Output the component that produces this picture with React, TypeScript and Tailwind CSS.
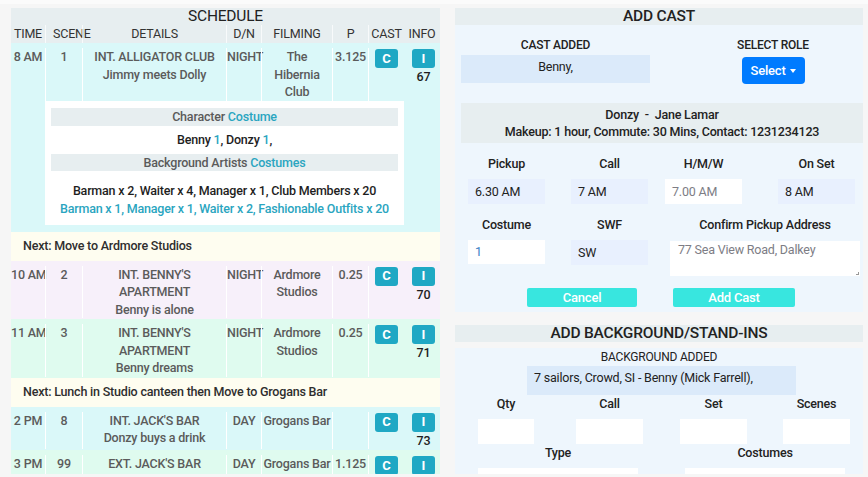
import React from "react";

const COLS = "grid grid-cols-[34px_37px_144px_35px_71px_36px_36px_36px]";

type Scene = {
  time: string;
  scene: string;
  details: string[];
  dn: string;
  filming: string[];
  p: string;
  info: string;
  bg: string;
  costumes?: boolean;
};

const scenes: (Scene | string)[] = [
  {
    time: "8 AM",
    scene: "1",
    details: ["INT. ALLIGATOR CLUB", "Jimmy meets Dolly"],
    dn: "NIGHT",
    filming: ["The", "Hibernia", "Club"],
    p: "3.125",
    info: "67",
    bg: "bg-[#daf8f9]",
    costumes: true,
  },
  "Next: Move to Ardmore Studios",
  {
    time: "10 AM",
    scene: "2",
    details: ["INT. BENNY'S", "APARTMENT", "Benny is alone"],
    dn: "NIGHT",
    filming: ["Ardmore", "Studios"],
    p: "0.25",
    info: "70",
    bg: "bg-[#f7f0fa]",
  },
  {
    time: "11 AM",
    scene: "3",
    details: ["INT. BENNY'S", "APARTMENT", "Benny dreams"],
    dn: "NIGHT",
    filming: ["Ardmore", "Studios"],
    p: "0.25",
    info: "71",
    bg: "bg-[#dffbef]",
  },
  "Next: Lunch in Studio canteen then Move to Grogans Bar",
  {
    time: "2 PM",
    scene: "8",
    details: ["INT. JACK'S BAR", "Donzy buys a drink"],
    dn: "DAY",
    filming: ["Grogans Bar"],
    p: "",
    info: "73",
    bg: "bg-[#daf8f9]",
  },
  {
    time: "3 PM",
    scene: "99",
    details: ["EXT. JACK'S BAR"],
    dn: "DAY",
    filming: ["Grogans Bar"],
    p: "1.125",
    info: "74",
    bg: "bg-[#dffbef]",
  },
];

function Btn({ label }: { label: string }) {
  return (
    <span className="inline-flex h-[19px] w-[23px] items-center justify-center rounded-[3px] bg-[#1fa8c4] text-[13px] font-bold tracking-normal text-white">
      {label}
    </span>
  );
}

function Lines({ items }: { items: string[] }) {
  return (
    <>
      {items.map((l) => (
        <div key={l} className="whitespace-nowrap">
          {l}
        </div>
      ))}
    </>
  );
}

function CostumeBox() {
  return (
    <div className="col-start-2 col-span-6 mb-[6px] bg-white px-[6px] pt-[7px] pb-[7px] text-center whitespace-nowrap">
      <div className="h-[18px] bg-[#e7eef0] leading-[18px] text-[#5a5a5a]">
        Character <span className="text-[#2aa5c0]">Costume</span>
      </div>
      <div className="mt-[5px] mb-[6px] leading-[17px] text-[#1e1e1e]">
        Benny <span className="text-[#2aa5c0]">1</span>, Donzy <span className="text-[#2aa5c0]">1</span>,
      </div>
      <div className="h-[17px] bg-[#e7eef0] leading-[17px] text-[#5a5a5a]">
        Background Artists <span className="text-[#2aa5c0]">Costumes</span>
      </div>
      <div className="mt-[11px] leading-[18px] text-[#1e1e1e]">Barman x 2, Waiter x 4, Manager x 1, Club Members x 20</div>
      <div className="leading-[18px] text-[#2aa5c0]">Barman x 1, Manager x 1, Waiter x 2, Fashionable Outfits x 20</div>
    </div>
  );
}

function SceneRow({ s }: { s: Scene }) {
  const cell = "border-l border-white text-center";
  return (
    <div className={`${COLS} ${s.bg} pt-[5px] pb-[1px] leading-[17.5px] font-medium text-[#5b5b5b]`}>
      <div className="text-center whitespace-nowrap">{s.time}</div>
      <div className={cell}>{s.scene}</div>
      <div className={cell}>
        <Lines items={s.details} />
      </div>
      <div className={`${cell} whitespace-nowrap`}>{s.dn}</div>
      <div className={cell}>
        <Lines items={s.filming} />
      </div>
      <div className={cell}>{s.p}</div>
      <div className={`${cell} pt-[1px]`}>
        <Btn label="C" />
      </div>
      <div className="flex flex-col items-center pt-[1px] pl-[3px]">
        <Btn label="I" />
        <span className="text-[#1e1e1e]">{s.info}</span>
      </div>
      {s.costumes && <CostumeBox />}
    </div>
  );
}

function Schedule() {
  const heads = ["TIME", "SCENE", "DETAILS", "D/N", "FILMING", "P", "CAST", "INFO"];
  return (
    <div className="h-[466px] w-[429px] overflow-hidden">
      <div className="bg-[#e7eef0]">
        <div className="h-[17px] text-center text-[15.5px] leading-[17px] text-[#222]">SCHEDULE</div>
        <div className={`${COLS} h-[18px] leading-[18px] text-[#333]`}>
          {heads.map((h, i) => (
            <div
              key={h}
              className={
                i === 1
                  ? "border-l border-white/70 pl-[7px] whitespace-nowrap"
                  : i > 1 && i < 7
                  ? "border-l border-white/70 text-center whitespace-nowrap"
                  : "text-center whitespace-nowrap"
              }
            >
              {h}
            </div>
          ))}
        </div>
      </div>
      {scenes.map((s, i) =>
        typeof s === "string" ? (
          <div key={i} className="flex h-[29px] items-center bg-[#fefdf0] pl-[12px] font-medium text-[#2e2e2e]">
            {s}
          </div>
        ) : (
          <SceneRow key={i} s={s} />
        )
      )}
    </div>
  );
}

function Label({ children }: { children: React.ReactNode }) {
  return <div className="text-center leading-[18px] font-medium whitespace-nowrap text-[#222]">{children}</div>;
}

function AddCast() {
  return (
    <div>
      <div className="h-[17px] bg-[#e7eef0] text-center text-[15.5px] leading-[17px] font-medium text-[#222]">ADD CAST</div>
      <div className="bg-[#eef6fd] pb-[5px]">
        <div className="flex pl-[6px] pt-[12px]">
          <div className="w-[189px]">
            <div className="text-center text-[12px] leading-[16px] font-medium text-[#222]">CAST ADDED</div>
            <div className="mt-[2px] h-[28px] bg-[#dbeafa] pt-[4px] text-center leading-[16px] text-[#222]">Benny,</div>
          </div>
          <div className="ml-[33px] flex w-[180px] flex-col items-center">
            <div className="text-[12px] leading-[16px] font-medium text-[#222]">SELECT ROLE</div>
            <button className="mt-[4px] flex h-[27px] w-[63px] items-center justify-center gap-[4px] rounded-[4px] bg-[#007bff] text-[13px] font-medium text-white">
              Select
              <span className="mt-[1px] h-0 w-0 border-x-[3.5px] border-t-[4px] border-x-transparent border-t-white" />
            </button>
          </div>
        </div>
        <div className="mt-[19px] ml-[6px] h-[40px] bg-[#e7eef0] pt-[3px] text-center leading-[17px] font-medium text-[#222]">
          <div>Donzy &nbsp;- &nbsp;Jane Lamar</div>
          <div>Makeup: 1 hour, Commute: 30 Mins, Contact: 1231234123</div>
        </div>
        <div className="mt-[12px] flex">
          <div className="ml-[13px] w-[77px]">
            <Label>Pickup</Label>
            <div className="mt-[6px] h-[25px] bg-[#e8f0fe] pl-[7px] leading-[25px] text-[#222]">6.30 AM</div>
          </div>
          <div className="ml-[26px] w-[77px]">
            <Label>Call</Label>
            <div className="mt-[6px] h-[25px] bg-[#e8f0fe] pl-[7px] leading-[25px] text-[#222]">7 AM</div>
          </div>
          <div className="ml-[17px] w-[77px]">
            <Label>H/M/W</Label>
            <div className="mt-[6px] h-[25px] bg-white pl-[7px] leading-[25px] text-[#7d7d85]">7.00 AM</div>
          </div>
          <div className="ml-[36px] w-[77px]">
            <Label>On Set</Label>
            <div className="mt-[6px] h-[25px] bg-[#e8f0fe] pl-[7px] leading-[25px] text-[#222]">8 AM</div>
          </div>
        </div>
        <div className="mt-[12px] flex">
          <div className="ml-[13px] w-[77px]">
            <Label>Costume</Label>
            <div className="mt-[6px] h-[24px] bg-white pl-[7px] leading-[24px] text-[#3a7fc4]">1</div>
          </div>
          <div className="ml-[26px] w-[77px]">
            <Label>SWF</Label>
            <div className="mt-[6px] h-[25px] bg-[#e8f0fe] pl-[7px] leading-[25px] text-[#222]">SW</div>
          </div>
          <div className="ml-[22px] w-[190px]">
            <Label>Confirm Pickup Address</Label>
            <div className="relative mt-[7px] h-[35px] bg-white pl-[8px] pt-[1px] leading-[16px] text-[#7d7d85]">
              77 Sea View Road, Dalkey
              <span className="absolute right-[1px] bottom-[1px] h-[3px] w-[3px] border-r border-b border-[#999]" />
            </div>
          </div>
        </div>
        <div className="mt-[12px] flex">
          <button className="ml-[72px] h-[19px] w-[110px] rounded-[2px] bg-[#38e6df] text-[13px] leading-[19px] font-medium text-white">Cancel</button>
          <button className="ml-[36px] h-[19px] w-[122px] rounded-[2px] bg-[#38e6df] text-[13px] leading-[19px] font-medium text-white">Add Cast</button>
        </div>
      </div>
    </div>
  );
}

function AddBackground() {
  return (
    <div className="mt-[13px]">
      <div className="h-[17px] bg-[#e7eef0] text-center text-[15.5px] leading-[17px] font-medium text-[#222]">ADD BACKGROUND/STAND-INS</div>
      <div className="mt-[6px] h-[200px] bg-[#eef6fd] pt-[1px]">
        <div className="text-center text-[12px] leading-[16px] text-[#222]">BACKGROUND ADDED</div>
        <div className="mt-[1px] ml-[72px] h-[29px] w-[269px] bg-[#dbeafa] pl-[7px] pt-[4px] leading-[16px] text-[#222]">
          7 sailors, Crowd, SI - Benny (Mick Farrell),
        </div>
        <div className="flex">
          <div className="ml-[23px] w-[56px]">
            <Label>Qty</Label>
            <div className="mt-[6px] h-[25px] bg-white" />
          </div>
          <div className="ml-[42px] w-[67px]">
            <Label>Call</Label>
            <div className="mt-[6px] h-[25px] bg-white" />
          </div>
          <div className="ml-[37px] w-[67px]">
            <Label>Set</Label>
            <div className="mt-[6px] h-[25px] bg-white" />
          </div>
          <div className="ml-[36px] w-[67px]">
            <Label>Scenes</Label>
            <div className="mt-[6px] h-[25px] bg-white" />
          </div>
        </div>
        <div className="flex">
          <div className="ml-[23px] w-[160px]">
            <Label>Type</Label>
            <div className="mt-[6px] h-[25px] bg-white" />
          </div>
          <div className="ml-[47px] w-[160px]">
            <Label>Costumes</Label>
            <div className="mt-[6px] h-[25px] bg-white" />
          </div>
        </div>
      </div>
    </div>
  );
}

export default function App() {
  return (
    <div className="h-[477px] w-[868px] overflow-hidden bg-[#f6f6f6] font-['Roboto',sans-serif] text-[12.5px] tracking-[-0.2px]">
      <div className="h-[4px] bg-[#fbfbfb]" />
      <div className="mt-[4px] flex h-[466px] pl-[11px]">
        <Schedule />
        <div className="ml-[15px] h-[466px] w-[408px] overflow-hidden">
          <AddCast />
          <AddBackground />
        </div>
      </div>
    </div>
  );
}
